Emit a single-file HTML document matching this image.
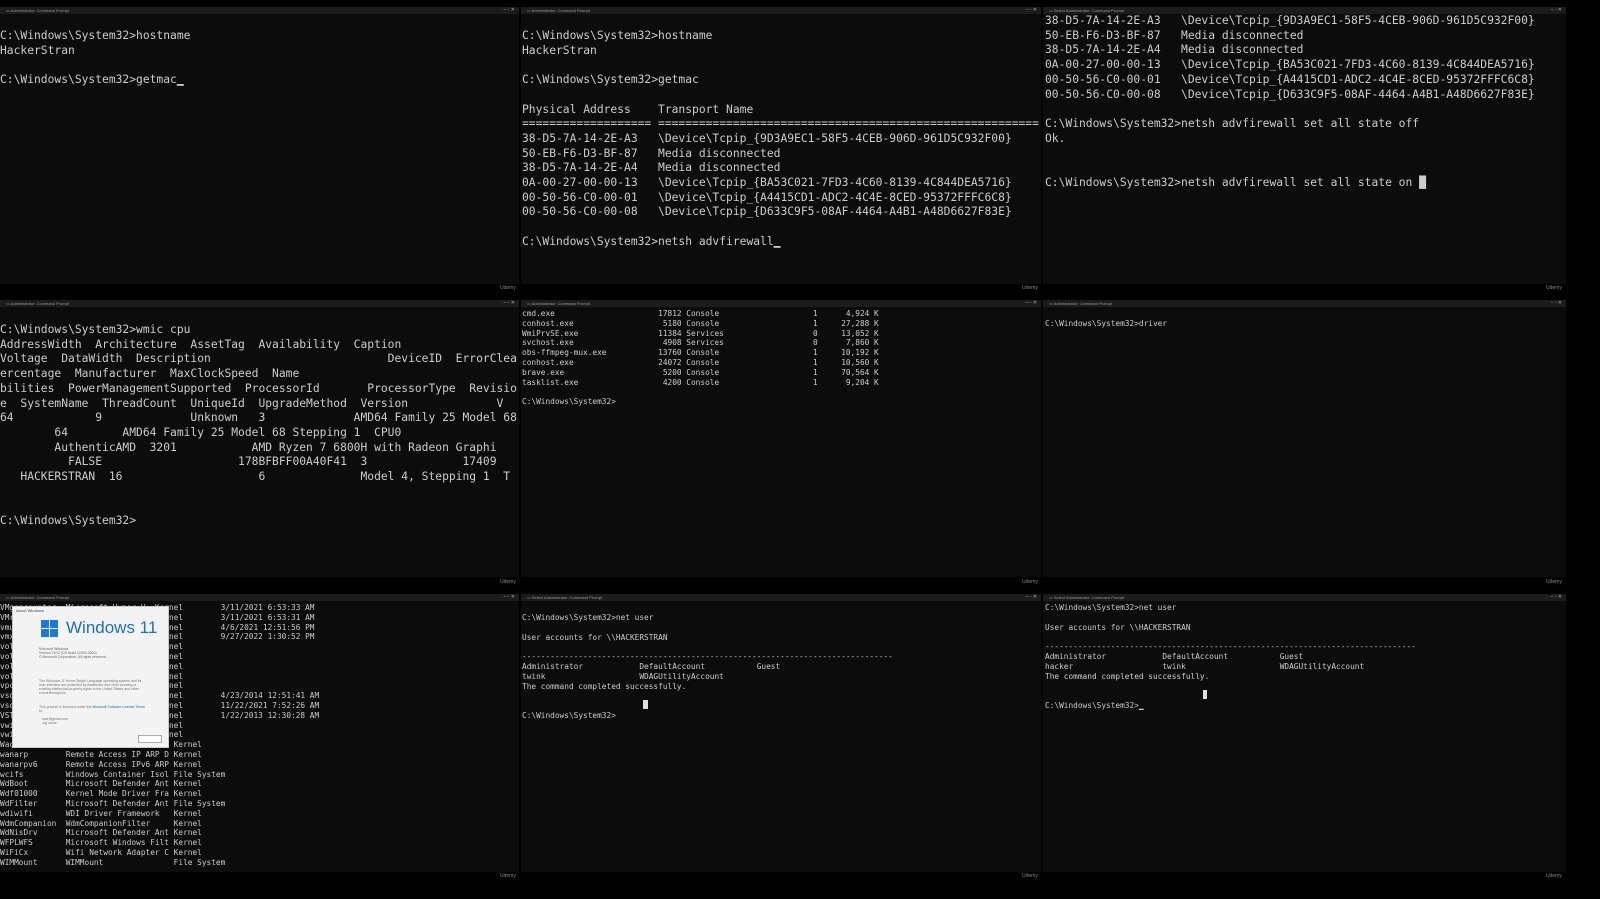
<!DOCTYPE html>
<html><head><meta charset="utf-8"><style>
body{margin:0;width:1600px;height:899px;background:#000;overflow:hidden;position:relative;font-family:"Liberation Mono",monospace;}
.p{position:absolute;background:#0c0c0c;overflow:hidden;}
.t{position:absolute;height:7px;background:#1c1c1c;}
.t span{position:absolute;left:6px;top:0;font:4px "Liberation Sans",sans-serif;color:#999;line-height:7px}
.t b{position:absolute;right:4px;top:0;font:5px "Liberation Sans",sans-serif;color:#aaa;line-height:7px}
pre{margin:0;position:absolute;color:#cccccc;white-space:pre;}
.L{font-size:11.3px;line-height:14.7px;}
.S{font-size:7.8px;line-height:9.8px;}
.u{position:absolute;font:5px "Liberation Sans",sans-serif;color:#888}
</style></head><body>
<div class="t" style="left:0;top:7px;width:519px"><span>▭ Administrator: Command Prompt</span><b>–  ▫  ✕</b></div>
<div class="t" style="left:521px;top:7px;width:520px"><span>▭ Administrator: Command Prompt</span><b>–  ▫  ✕</b></div>
<div class="t" style="left:1043px;top:7px;width:523px"><span>▭ Select Administrator: Command Prompt</span><b>–  ▫  ✕</b></div>
<div class="t" style="left:0;top:300px;width:519px"><span>▭ Administrator: Command Prompt</span><b>–  ▫  ✕</b></div>
<div class="t" style="left:521px;top:300px;width:520px"><span>▭ Administrator: Command Prompt</span><b>–  ▫  ✕</b></div>
<div class="t" style="left:1043px;top:300px;width:523px"><span>▭ Administrator: Command Prompt</span><b>–  ▫  ✕</b></div>
<div class="t" style="left:0;top:594px;width:519px"><span>▭ Administrator: Command Prompt</span><b>–  ▫  ✕</b></div>
<div class="t" style="left:521px;top:594px;width:520px"><span>▭ Select Administrator: Command Prompt</span><b>–  ▫  ✕</b></div>
<div class="t" style="left:1043px;top:594px;width:523px"><span>▭ Select Administrator: Command Prompt</span><b>–  ▫  ✕</b></div>
<div class="p" style="left:0;top:14px;width:519px;height:270px"></div>
<div class="p" style="left:521px;top:14px;width:520px;height:270px"></div>
<div class="p" style="left:1043px;top:14px;width:523px;height:270px"></div>
<div class="p" style="left:0;top:307px;width:519px;height:270px"></div>
<div class="p" style="left:521px;top:307px;width:520px;height:270px"></div>
<div class="p" style="left:1043px;top:307px;width:523px;height:270px"></div>
<div class="p" style="left:0;top:601px;width:519px;height:271px"></div>
<div class="p" style="left:521px;top:601px;width:520px;height:271px"></div>
<div class="p" style="left:1043px;top:601px;width:523px;height:271px"></div>
<div class="u" style="left:500px;top:285px">Udemy</div><div class="u" style="left:1022px;top:285px">Udemy</div><div class="u" style="left:1546px;top:285px">Udemy</div>
<div class="u" style="left:500px;top:579px">Udemy</div><div class="u" style="left:1022px;top:579px">Udemy</div><div class="u" style="left:1546px;top:579px">Udemy</div>
<div class="u" style="left:500px;top:873px">Udemy</div><div class="u" style="left:1022px;top:873px">Udemy</div><div class="u" style="left:1546px;top:873px">Udemy</div>

<pre class="L" style="left:0;top:29px">C:\Windows\System32>hostname
HackerStran

C:\Windows\System32>getmac▁</pre>

<pre class="L" style="left:522px;top:29px">C:\Windows\System32>hostname
HackerStran

C:\Windows\System32>getmac

Physical Address    Transport Name
=================== ========================================================
38-D5-7A-14-2E-A3   \Device\Tcpip_{9D3A9EC1-58F5-4CEB-906D-961D5C932F00}
50-EB-F6-D3-BF-87   Media disconnected
38-D5-7A-14-2E-A4   Media disconnected
0A-00-27-00-00-13   \Device\Tcpip_{BA53C021-7FD3-4C60-8139-4C844DEA5716}
00-50-56-C0-00-01   \Device\Tcpip_{A4415CD1-ADC2-4C4E-8CED-95372FFFC6C8}
00-50-56-C0-00-08   \Device\Tcpip_{D633C9F5-08AF-4464-A4B1-A48D6627F83E}

C:\Windows\System32>netsh advfirewall▁</pre>

<pre class="L" style="left:1045px;top:14px">38-D5-7A-14-2E-A3   \Device\Tcpip_{9D3A9EC1-58F5-4CEB-906D-961D5C932F00}
50-EB-F6-D3-BF-87   Media disconnected
38-D5-7A-14-2E-A4   Media disconnected
0A-00-27-00-00-13   \Device\Tcpip_{BA53C021-7FD3-4C60-8139-4C844DEA5716}
00-50-56-C0-00-01   \Device\Tcpip_{A4415CD1-ADC2-4C4E-8CED-95372FFFC6C8}
00-50-56-C0-00-08   \Device\Tcpip_{D633C9F5-08AF-4464-A4B1-A48D6627F83E}

C:\Windows\System32>netsh advfirewall set all state off
Ok.


C:\Windows\System32>netsh advfirewall set all state on █</pre>

<pre class="L" style="left:0;top:323px">C:\Windows\System32>wmic cpu
AddressWidth  Architecture  AssetTag  Availability  Caption
Voltage  DataWidth  Description                          DeviceID  ErrorClea
ercentage  Manufacturer  MaxClockSpeed  Name
bilities  PowerManagementSupported  ProcessorId       ProcessorType  Revisio
e  SystemName  ThreadCount  UniqueId  UpgradeMethod  Version             V
64            9             Unknown   3             AMD64 Family 25 Model 68
        64        AMD64 Family 25 Model 68 Stepping 1  CPU0
        AuthenticAMD  3201           AMD Ryzen 7 6800H with Radeon Graphi
          FALSE                    178BFBFF00A40F41  3              17409
   HACKERSTRAN  16                    6              Model 4, Stepping 1  T


C:\Windows\System32></pre>

<pre class="S" style="left:522px;top:309px">cmd.exe                      17812 Console                    1      4,924 K
conhost.exe                   5180 Console                    1     27,288 K
WmiPrvSE.exe                 11384 Services                   0     13,052 K
svchost.exe                   4908 Services                   0      7,860 K
obs-ffmpeg-mux.exe           13760 Console                    1     10,192 K
conhost.exe                  24072 Console                    1     10,560 K
brave.exe                     5200 Console                    1     70,564 K
tasklist.exe                  4200 Console                    1      9,204 K

C:\Windows\System32></pre>

<pre class="S" style="left:1045px;top:319px">C:\Windows\System32>driver</pre>

<pre class="S" style="left:0;top:603px">VMgencounter  Microsoft Hyper-V  Kernel        3/11/2021 6:53:33 AM
VMrsgenctr    Microsoft Hyper-V  Kernel        3/11/2021 6:53:31 AM
vmusb         VMware USB Monitor Kernel        4/6/2021 12:51:56 PM
vmx86         VMware vmx86       Kernel        9/27/2022 1:30:52 PM
volmgr        Volume Manager Dri Kernel
volmgrx       Dynamic Volume Man Kernel
volsnap       Volume Shadow Copy Kernel
volume        Volume             Kernel
vpci          Microsoft Hyper-V  Kernel
vsock         vSockets Virtual M Kernel        4/23/2014 12:51:41 AM
vsock_vmci    VMware vSockets Se Kernel        11/22/2021 7:52:26 AM
VSTXRAID      VIA StorX Storage  Kernel        1/22/2013 12:30:28 AM
vwifibus      Virtual Wireless B Kernel
vwififlt      Virtual WiFi Filte Kernel
WacomPen      Wacom Serial Pen HID D Kernel
wanarp        Remote Access IP ARP D Kernel
wanarpv6      Remote Access IPv6 ARP Kernel
wcifs         Windows Container Isol File System
WdBoot        Microsoft Defender Ant Kernel
Wdf01000      Kernel Mode Driver Fra Kernel
WdFilter      Microsoft Defender Ant File System
wdiwifi       WDI Driver Framework   Kernel
WdmCompanion  WdmCompanionFilter     Kernel
WdNisDrv      Microsoft Defender Ant Kernel
WFPLWFS       Microsoft Windows Filt Kernel
WiFiCx        Wifi Network Adapter C Kernel
WIMMount      WIMMount               File System</pre>
<div style="position:absolute;left:12px;top:606px;width:155px;height:140px;background:#f3f3f3;border:1px solid #ccc;font-family:'Liberation Sans',sans-serif">
  <div style="position:absolute;left:3px;top:1px;font-size:4px;color:#444">About Windows</div>
  <div style="position:absolute;left:28px;top:13px;width:8px;height:8px;background:#1c7ad4"></div>
  <div style="position:absolute;left:37px;top:13px;width:8px;height:8px;background:#1c7ad4"></div>
  <div style="position:absolute;left:28px;top:22px;width:8px;height:8px;background:#1c7ad4"></div>
  <div style="position:absolute;left:37px;top:22px;width:8px;height:8px;background:#1c7ad4"></div>
  <div style="position:absolute;left:53px;top:11px;font-size:17px;color:#1f6fb8">Windows 11</div>
  <div style="position:absolute;left:26px;top:40px;width:100px;height:20px;font-size:3.5px;color:#666;line-height:4px">Microsoft Windows<br>Version 21H2 (OS Build 22000.2600)<br>© Microsoft Corporation. All rights reserved.</div>
  <div style="position:absolute;left:26px;top:72px;width:110px;font-size:3.5px;color:#777;line-height:4px">The Windows 11 Home Single Language operating system and its user interface are protected by trademark and other pending or existing intellectual property rights in the United States and other countries/regions.</div>
  <div style="position:absolute;left:26px;top:98px;width:110px;font-size:3.5px;color:#777;line-height:4px">This product is licensed under the <span style="color:#1f6fb8">Microsoft Software License Terms</span> to:<br><br>&nbsp;&nbsp;&nbsp;user@gmail.com<br>&nbsp;&nbsp;&nbsp;org name</div>
  <div style="position:absolute;right:6px;bottom:4px;width:22px;height:6px;border:1px solid #aaa;background:#fff"></div>
</div>

<pre class="S" style="left:522px;top:613px">C:\Windows\System32>net user

User accounts for \\HACKERSTRAN

-------------------------------------------------------------------------------
Administrator            DefaultAccount           Guest
twink                    WDAGUtilityAccount
The command completed successfully.


C:\Windows\System32></pre>
<div style="position:absolute;left:643px;top:700px;width:5px;height:9px;background:#ddd"></div>

<pre class="S" style="left:1045px;top:603px">C:\Windows\System32>net user

User accounts for \\HACKERSTRAN

-------------------------------------------------------------------------------
Administrator            DefaultAccount           Guest
hacker                   twink                    WDAGUtilityAccount
The command completed successfully.


C:\Windows\System32>▁</pre>
<div style="position:absolute;left:1203px;top:690px;width:4px;height:9px;background:#ddd"></div>
</body></html>
